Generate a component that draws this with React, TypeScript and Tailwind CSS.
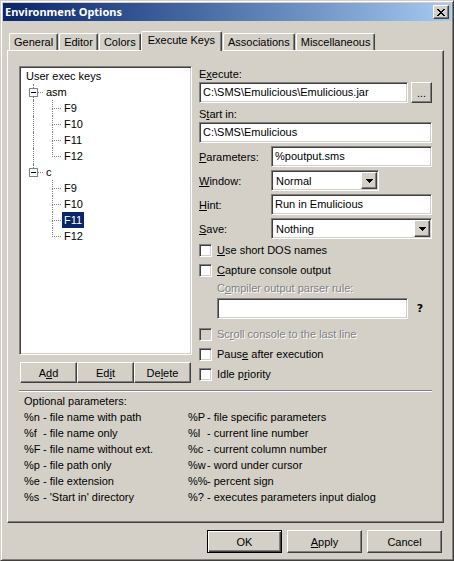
import { useState } from "react";
import type { ReactNode } from "react";

const sunken =
  "border border-t-[#808080] border-l-[#808080] border-r-white border-b-white shadow-[inset_1px_1px_#404040,inset_-1px_-1px_#d4d0c8]";
const raised =
  "border border-t-white border-l-white border-r-[#404040] border-b-[#404040] shadow-[inset_-1px_-1px_#808080]";

const tabs = ["General", "Editor", "Colors", "Execute Keys", "Associations", "Miscellaneous"];
const groups = ["asm", "c"];
const keys = ["F9", "F10", "F11", "F12"];

const leftParams = [
  ["%n", "file name with path"],
  ["%f", "file name only"],
  ["%F", "file name without ext."],
  ["%p", "file path only"],
  ["%e", "file extension"],
  ["%s", "'Start in' directory"],
];
const rightParams = [
  ["%P", "file specific parameters"],
  ["%l", "current line number"],
  ["%c", "current column number"],
  ["%w", "word under cursor"],
  ["%%", "percent sign"],
  ["%?", "executes parameters input dialog"],
];

/* Caption with its access key underlined; the key follows the "&" sign. */
function Caption({ text }: { text: string }) {
  const at = text.indexOf("&");
  if (at < 0) return <>{text}</>;
  return (
    <>
      {text.slice(0, at)}
      <u className="underline-offset-1">{text[at + 1]}</u>
      {text.slice(at + 2)}
    </>
  );
}

function TextBox({ id, value = "", disabled }: { id: string; value?: string; disabled?: boolean }) {
  return (
    <input
      id={id}
      type="text"
      defaultValue={value}
      disabled={disabled}
      className={`h-[21px] w-full min-w-0 bg-white px-[3px] pb-px outline-none ${sunken}`}
    />
  );
}

function DropDown({ id, options }: { id: string; options: string[] }) {
  return (
    <div className="relative w-full">
      <select
        id={id}
        className={`block h-[21px] w-full appearance-none bg-white pr-5 pl-1 outline-none ${sunken}`}
      >
        {options.map((o) => (
          <option key={o}>{o}</option>
        ))}
      </select>
      <span
        className={`pointer-events-none absolute top-[2px] right-[2px] flex h-[17px] w-4 items-center justify-center bg-[#d4d0c8] ${raised}`}
      >
        <svg width="7" height="4" viewBox="0 0 7 4" shapeRendering="crispEdges">
          <path d="M0 0h7v1h-1v1h-1v1h-1v1h-1v-1h-1v-1h-1v-1h-1z" />
        </svg>
      </span>
    </div>
  );
}

function Check({ text, disabled }: { text: string; disabled?: boolean }) {
  return (
    <label className={`flex h-5 items-center gap-[5px] ${disabled ? "text-[#808080] text-shadow-[1px_1px_#fff]" : ""}`}>
      <input
        type="checkbox"
        disabled={disabled}
        className={`size-[13px] appearance-none ${disabled ? "bg-[#d4d0c8]" : "bg-white"} ${sunken}`}
      />
      <span>
        <Caption text={text} />
      </span>
    </label>
  );
}

function Push({ text, className = "" }: { text: string; className?: string }) {
  return (
    <button type="button" className={`bg-[#d4d0c8] ${raised} ${className}`}>
      <Caption text={text} />
    </button>
  );
}

function Field({ id, label, children }: { id: string; label: string; children: ReactNode }) {
  return (
    <div className="grid grid-cols-[72px_1fr] items-center">
      <label htmlFor={id}>
        <Caption text={label} />
      </label>
      {children}
    </div>
  );
}

function Tree() {
  const [selected, setSelected] = useState("c/F11");
  return (
    <div className={`h-[289px] bg-white px-[2px] pt-px ${sunken}`}>
      <div className="h-4 pl-1 leading-4">User exec keys</div>
      <ul>
        {groups.map((g, gi) => {
          const lastGroup = gi === groups.length - 1;
          return (
            <li key={g}>
              <div className="flex h-4 items-center pl-[7px]">
                <span className="flex h-4 w-[9px] flex-col items-center">
                  <span className="h-1 w-px border-l border-dotted border-[#808080]" />
                  <svg width="9" height="9" viewBox="0 0 9 9" shapeRendering="crispEdges">
                    <path d="M0.500 0.500h8v8h-8z" fill="#fff" stroke="#808080" />
                    <path d="M2 4h5v1h-5z" />
                  </svg>
                  {!lastGroup && <span className="h-[3px] w-px border-l border-dotted border-[#808080]" />}
                </span>
                <span className="w-[5px] border-t border-dotted border-[#808080]" />
                <span className="pl-[3px]">{g}</span>
              </div>
              <ul>
                {keys.map((k, ki) => {
                  const id = `${g}/${k}`;
                  const on = id === selected;
                  return (
                    <li key={k} className="flex h-4 pl-[11px]">
                      <span className={`w-[19px] ${lastGroup ? "" : "border-l border-dotted border-[#808080]"}`} />
                      <span className="flex w-[10px] flex-col">
                        <span className="h-[9px] w-[9px] border-b border-l border-dotted border-[#808080]" />
                        {ki < keys.length - 1 && (
                          <span className="h-[7px] w-[9px] border-l border-dotted border-[#808080]" />
                        )}
                      </span>
                      <button
                        type="button"
                        onClick={() => setSelected(id)}
                        className={`h-4 px-[2px] leading-4 ${on ? "bg-[#0a246a] text-white" : ""}`}
                      >
                        {k}
                      </button>
                    </li>
                  );
                })}
              </ul>
            </li>
          );
        })}
      </ul>
    </div>
  );
}

function ParamList({ items }: { items: string[][] }) {
  return (
    <dl className="grid grid-cols-[19px_1fr]">
      {items.map(([code, meaning]) => (
        <div key={code} className="contents">
          <dt>{code}</dt>
          <dd className="whitespace-nowrap">- {meaning}</dd>
        </div>
      ))}
    </dl>
  );
}

export default function App() {
  const [tab, setTab] = useState("Execute Keys");
  return (
    <div className="flex min-h-screen flex-col border border-t-[#d4d0c8] border-r-[#404040] border-b-[#404040] border-l-[#d4d0c8] bg-[#d4d0c8] p-[2px] font-['Liberation_Sans',sans-serif] text-[11px] leading-4 text-black shadow-[inset_1px_1px_#fff,inset_-1px_-1px_#808080]">
      <header className="flex h-[18px] items-center justify-between bg-linear-to-r from-[#0a246a] to-[#a6caf0] px-[2px]">
        <h1 className="font-['Noto_Sans',sans-serif] text-[11px] font-bold text-white">Environment Options</h1>
        <button
          type="button"
          aria-label="Close"
          className={`flex h-[14px] w-4 items-center justify-center bg-[#d4d0c8] ${raised}`}
        >
          <svg width="8" height="7" viewBox="0 0 8 7" shapeRendering="crispEdges">
            <path d="M0 0h2v1h1v1h2v-1h1v-1h2v1h-1v1h-1v1h-1v1h1v1h1v1h1v1h-2v-1h-1v-1h-2v1h-1v1h-2v-1h1v-1h1v-1h1v-1h-1v-1h-1v-1h-1z" />
          </svg>
        </button>
      </header>

      <main className="pt-[10px] pr-[7px] pl-1">
        <div role="tablist" className="flex h-[19px] items-end pl-[2px]">
          {tabs.map((t) => (
            <button
              key={t}
              type="button"
              role="tab"
              aria-selected={t === tab}
              onClick={() => setTab(t)}
              className={`mr-px rounded-t-[2px] border border-b-0 border-t-white border-r-[#404040] border-l-white bg-[#d4d0c8] whitespace-nowrap shadow-[inset_-1px_0_#808080] ${
                t === tab ? "z-10 -mb-px -ml-px h-5 px-[6px] pb-1" : "h-[17px] px-1"
              }`}
            >
              {t}
            </button>
          ))}
        </div>

        <section className={`px-[11px] pt-[15px] pb-[17px] ${raised}`}>
          <div className="grid grid-cols-[173px_1fr] gap-x-[7px]">
            <div>
              <Tree />
              <div className="mt-[7px] grid grid-cols-3 px-px">
                <Push text="A&dd" className="h-[21px]" />
                <Push text="Ed&it" className="h-[21px]" />
                <Push text="De&lete" className="h-[21px]" />
              </div>
            </div>

            <form>
              <label htmlFor="execute" className="block h-4">
                <Caption text="E&xecute:" />
              </label>
              <div className="flex gap-[3px]">
                <TextBox id="execute" value="C:\SMS\Emulicious\Emulicious.jar" />
                <Push text="..." className="h-[21px] w-[21px] shrink-0" />
              </div>
              <label htmlFor="start" className="mt-[3px] block h-4">
                <Caption text="S&tart in:" />
              </label>
              <TextBox id="start" value="C:\SMS\Emulicious" />
              <div className="mt-[3px] grid gap-[3px]">
                <Field id="parameters" label="&Parameters:">
                  <TextBox id="parameters" value="%poutput.sms" />
                </Field>
                <Field id="window" label="&Window:">
                  <div className="w-[108px]">
                    <DropDown id="window" options={["Normal", "Minimized", "Maximized"]} />
                  </div>
                </Field>
                <Field id="hint" label="&Hint:">
                  <TextBox id="hint" value="Run in Emulicious" />
                </Field>
                <Field id="save" label="&Save:">
                  <DropDown id="save" options={["Nothing", "Current file", "All files"]} />
                </Field>
              </div>
              <div className="mt-px">
                <Check text="&Use short DOS names" />
                <Check text="&Capture console output" />
              </div>
              <div className="pl-[18px]">
                <label htmlFor="rule" className="block h-[18px] text-[#808080] text-shadow-[1px_1px_#fff]">
                  <Caption text="C&ompiler output parser rule:" />
                </label>
                <div className="flex items-center">
                  <TextBox id="rule" disabled />
                  <button type="button" className="w-6 shrink-0 font-['DejaVu_Sans',sans-serif] font-bold">
                    ?
                  </button>
                </div>
              </div>
              <div className="mt-[5px]">
                <Check text="Sc&roll console to the last line" disabled />
                <Check text="Paus&e after execution" />
                <Check text="Idle p&riority" />
              </div>
            </form>
          </div>

          <hr className="mt-[6px] mb-px h-[2px] border-t border-b border-t-[#808080] border-b-white" />

          <div className="pl-[5px]">
            <h2>Optional parameters:</h2>
            <div className="grid grid-cols-[164px_1fr]">
              <ParamList items={leftParams} />
              <ParamList items={rightParams} />
            </div>
          </div>
        </section>
      </main>

      <footer className="flex justify-end gap-[5px] px-[9px] pt-[7px] pb-[5px]">
        <button
          type="button"
          className="h-[23px] w-[75px] border border-black bg-[#d4d0c8] shadow-[inset_1px_1px_#fff,inset_-1px_-1px_#404040,inset_-2px_-2px_#808080]"
        >
          OK
        </button>
        <Push text="&Apply" className="h-[23px] w-[75px]" />
        <Push text="Cancel" className="h-[23px] w-[75px]" />
      </footer>
    </div>
  );
}
